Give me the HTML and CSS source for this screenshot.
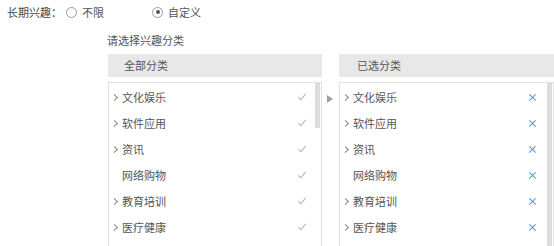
FILE: index.html
```html
<!DOCTYPE html>
<html lang="zh">
<head>
<meta charset="utf-8">
<link rel="stylesheet" href="styles.css">
</head>
<body>
<div class="top">
  <span class="label">长期兴趣：</span>
  <span class="radio"></span><span class="opt">不限</span>
  <span class="radio radio-on"></span><span class="opt">自定义</span>
</div>
<div class="section">
  <div class="hint">请选择兴趣分类</div>
  <div class="panels">
    <div class="panel">
      <div class="head">全部分类</div>
      <div class="list">
        <div class="thumb thumb-left"></div>
        <div class="row"><span class="chev"></span><span class="name">文化娱乐</span><span class="check"></span></div>
        <div class="row"><span class="chev"></span><span class="name">软件应用</span><span class="check"></span></div>
        <div class="row"><span class="chev"></span><span class="name">资讯</span><span class="check"></span></div>
        <div class="row"><span class="chev chev-none"></span><span class="name">网络购物</span><span class="check"></span></div>
        <div class="row"><span class="chev"></span><span class="name">教育培训</span><span class="check"></span></div>
        <div class="row"><span class="chev"></span><span class="name">医疗健康</span><span class="check"></span></div>
      </div>
    </div>
    <div class="mid"><span class="tri"></span></div>
    <div class="panel panel-right">
      <div class="head">已选分类</div>
      <div class="list">
        <div class="thumb thumb-right"></div>
        <div class="row"><span class="chev"></span><span class="name">文化娱乐</span><span class="del"></span></div>
        <div class="row"><span class="chev"></span><span class="name">软件应用</span><span class="del"></span></div>
        <div class="row"><span class="chev"></span><span class="name">资讯</span><span class="del"></span></div>
        <div class="row"><span class="chev chev-none"></span><span class="name">网络购物</span><span class="del"></span></div>
        <div class="row"><span class="chev"></span><span class="name">教育培训</span><span class="del"></span></div>
        <div class="row"><span class="chev"></span><span class="name">医疗健康</span><span class="del"></span></div>
      </div>
    </div>
  </div>
</div>
</body>
</html>
```
FILE: styles.css
```css
html, body { margin: 0; padding: 0; background: #fff; }
body {
  font-family: "Noto Sans CJK SC", "Noto Sans", sans-serif;
  font-size: 11px;
  color: #555;
  width: 554px;
  height: 246px;
  overflow: hidden;
}
.top {
  display: flex;
  align-items: center;
  height: 24px;
  padding-left: 7px;
}
.label { margin-right: 4px; color: #444; }
.radio {
  width: 9px;
  height: 9px;
  border: 1px solid #9a9a9a;
  border-radius: 50%;
  position: relative;
  margin-right: 5px;
}
.radio-on::after {
  content: "";
  position: absolute;
  left: 2.5px;
  top: 2.5px;
  width: 4px;
  height: 4px;
  border-radius: 50%;
  background: #555;
}
.opt { margin-right: 48px; color: #555; }
.section { margin-left: 107px; }
.hint {
  margin-top: 9px;
  height: 14px;
  line-height: 14px;
  color: #555;
}
.panels {
  display: flex;
  margin-top: 7px;
  margin-left: 1px;
}
.panel { width: 214px; }
.panel-right { width: 215px; }
.head {
  height: 23px;
  line-height: 23px;
  background: #e8e8e8;
  padding-left: 16px;
  color: #555;
}
.panel-right .head { padding-left: 18px; }
.list {
  margin-top: 5px;
  border: 1px solid #e2e2e2;
  border-bottom: none;
  height: 170px;
  padding-top: 1px;
  position: relative;
}
.thumb {
  position: absolute;
  top: 0;
  width: 5px;
  background: #dcdcdc;
}
.thumb-left { right: 1px; height: 45px; }
.thumb-right { right: 1px; height: 170px; }
.row {
  display: flex;
  align-items: center;
  height: 26px;
  padding-left: 4px;
}
.chev {
  width: 9px;
  height: 26px;
  flex: none;
  position: relative;
}
.chev::before {
  content: "";
  position: absolute;
  left: -1px;
  top: 10.5px;
  width: 3.8px;
  height: 3.8px;
  border-right: 1px solid #8a8a8a;
  border-top: 1px solid #8a8a8a;
  transform: rotate(45deg);
}
.chev-none::before { display: none; }
.name { flex: 1; }
.check {
  width: 7px;
  height: 3px;
  border-left: 1px solid #b0b0b0;
  border-bottom: 1px solid #b0b0b0;
  transform: rotate(-50deg);
  margin-right: 15px;
  margin-top: -3px;
}
.del {
  width: 9px;
  height: 9px;
  position: relative;
  margin-right: 16px;
}
.del::before, .del::after {
  content: "";
  position: absolute;
  left: 0;
  top: 4px;
  width: 9px;
  height: 1.3px;
  background: #4a9bd4;
  transform: rotate(45deg);
}
.del::after { transform: rotate(-45deg); }
.mid {
  width: 17px;
  position: relative;
}
.tri {
  position: absolute;
  left: 5px;
  top: 41px;
  width: 0;
  height: 0;
  border-top: 4px solid transparent;
  border-bottom: 4px solid transparent;
  border-left: 6px solid #a0a0a0;
}
```
